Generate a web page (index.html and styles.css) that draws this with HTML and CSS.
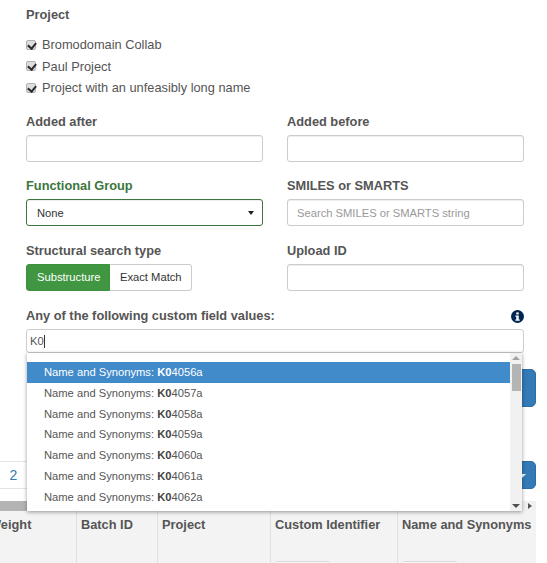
FILE: index.html
```html
<!DOCTYPE html>
<html lang="en">
<head>
<meta charset="utf-8">
<title>Compound search</title>
<link rel="stylesheet" href="styles.css">
</head>
<body>
<div class="page">
  <form class="form">
    <div class="group project">
      <div class="label">Project</div>
      <label class="check"><input type="checkbox" checked>Bromodomain Collab</label>
      <label class="check"><input type="checkbox" checked>Paul Project</label>
      <label class="check"><input type="checkbox" checked>Project with an unfeasibly long name</label>
    </div>
    <div class="grid">
      <div class="group">
        <div class="label">Added after</div>
        <input class="field" type="text">
      </div>
      <div class="group">
        <div class="label">Added before</div>
        <input class="field" type="text">
      </div>
      <div class="group">
        <div class="label success">Functional Group</div>
        <div class="field select success-field">None<span class="caret"></span></div>
      </div>
      <div class="group">
        <div class="label">SMILES or SMARTS</div>
        <input class="field" type="text" placeholder="Search SMILES or SMARTS string">
      </div>
      <div class="group">
        <div class="label">Structural search type</div>
        <div class="btns">
          <span class="btn active">Substructure</span><span class="btn">Exact Match</span>
        </div>
      </div>
      <div class="group">
        <div class="label">Upload ID</div>
        <input class="field" type="text">
      </div>
    </div>
    <div class="custom">
      <div class="custom-head">
        <div class="label">Any of the following custom field values:</div>
        <svg class="info" viewBox="0 0 14 14" width="13" height="13"><circle cx="7" cy="7" r="7" fill="#00254f"/><rect x="5.700" y="2.600" width="2.600" height="2.200" fill="#fff"/><path d="M4.700 5.800h3.600v4.300h1.100v1.400H4.700v-1.400h1V7.200h-1z" fill="#fff"/></svg>
      </div>
      <div class="tagbox">K0<span class="cursor"></span></div>
    </div>
  </form>
  <div class="lower">
    <div class="action action-top"></div>
    <div class="pager-row">
      <span class="page-cell"><span class="page-num">2</span></span>
      <span class="action action-small"><span class="small-caret"></span></span>
    </div>
    <div class="hscroll"><span class="thumb"></span><span class="arrow-right"></span></div>
    <div class="thead">
      <div class="th c1">Weight</div>
      <div class="th c2">Batch ID</div>
      <div class="th c3">Project</div>
      <div class="th c4">Custom Identifier<span class="filter"></span></div>
      <div class="th c5">Name and Synonyms<span class="filter"></span></div>
    </div>
  </div>
  <div class="menu">
    <ul class="items">
      <li class="item on">Name and Synonyms: <b>K0</b>4056a</li>
      <li class="item">Name and Synonyms: <b>K0</b>4057a</li>
      <li class="item">Name and Synonyms: <b>K0</b>4058a</li>
      <li class="item">Name and Synonyms: <b>K0</b>4059a</li>
      <li class="item">Name and Synonyms: <b>K0</b>4060a</li>
      <li class="item">Name and Synonyms: <b>K0</b>4061a</li>
      <li class="item">Name and Synonyms: <b>K0</b>4062a</li>
    </ul>
    <div class="vscroll"><span class="up"></span><span class="vthumb"></span><span class="down"></span></div>
  </div>
</div>
</body>
</html>
```
FILE: styles.css
```css
* { box-sizing: border-box; }
html, body { margin: 0; padding: 0; background: #fff; height: 563px; overflow: hidden; }
body { font-family: "Liberation Sans", Arial, sans-serif; font-size: 12.8px; color: #555; }
.page { position: relative; width: 536px; height: 563px; overflow: hidden; }
.form { padding: 7px 12px 0 26px; }
.label { font-weight: 700; font-size: 12.8px; line-height: 16px; color: #555; }
.label.success { color: #3c763d; }
.project .label { margin-bottom: 11px; }
.check { display: flex; align-items: center; height: 21.500px; font-size: 12.8px; color: #555; }
.check input { position: relative; appearance: none; margin: 0 6px 0 0; width: 10px; height: 10px; background: #dedede; border: 1px solid #b0b0b0; border-radius: 2px; }
.check input::after { content: ""; position: absolute; left: 2px; top: 0; width: 4px; height: 6px; border: solid #2a2a2a; border-width: 0 2px 2px 0; transform: rotate(40deg); }
.grid { display: grid; grid-template-columns: 237px 237px; grid-auto-rows: 64.500px; column-gap: 24px; margin-top: 15px; }
.group .field, .btns { margin-top: 5px; }
.field { display: block; width: 100%; height: 27px; border: 1px solid #ccc; border-radius: 3px; padding: 0 9px; font-family: inherit; font-size: 11.2px; color: #555; background: #fff; box-shadow: inset 0 1px 1px rgba(0,0,0,.075); }
.field::placeholder { color: #999; opacity: 1; }
.select { position: relative; display: flex; align-items: center; padding-left: 10px; color: #333; }
.success-field { border-color: #3c763d; }
.caret { position: absolute; right: 8px; top: 11px; border-top: 4px solid #222; border-left: 3.500px solid transparent; border-right: 3.500px solid transparent; }
.btns { display: flex; }
.btn { display: flex; align-items: center; width: 82px; height: 27px; padding: 0 10px; font-size: 11.2px; color: #333; border: 1px solid #ccc; border-left: 0; border-radius: 0 3px 3px 0; white-space: nowrap; }
.btn.active { width: 84px; color: #fff; background: #419641; border: 1px solid #3e8f3e; border-radius: 3px 0 0 3px; }
.custom-head { display: flex; justify-content: space-between; align-items: center; margin-top: 1px; }
.tagbox { display: flex; align-items: center; height: 24px; margin-top: 5px; padding-left: 3px; border: 1px solid #ccc; border-radius: 3px; font-size: 11.2px; color: #555; }
.cursor { display: inline-block; width: 1px; height: 13px; background: #333; }
.lower { position: absolute; left: 0; right: 0; top: 369px; bottom: 0; }
.action { background: #337ab7; border: 1px solid #2e6da4; }
.action-top { position: absolute; right: 0; top: 0; width: 40px; height: 38px; border-radius: 5px; }
.pager-row { position: absolute; left: 0; right: 0; top: 92px; height: 28px; }
.page-cell { position: absolute; left: 0; top: 0; width: 30px; height: 28px; border: solid #e4e4e4; border-width: 1px 0; }
.page-num { position: absolute; left: 9.500px; top: 5px; color: #337ab7; font-size: 14px; line-height: 16px; }
.action-small { position: absolute; right: 0; top: 0; width: 40px; height: 28px; border-radius: 5px; }
.small-caret { position: absolute; right: 9px; top: 12px; border-top: 4px solid #fff; border-left: 4px solid transparent; border-right: 4px solid transparent; }
.hscroll { position: absolute; left: 0; right: 0; top: 132px; height: 10px; background: #f1f1f1; }
.thumb { position: absolute; left: 0; top: 0; width: 120px; height: 10px; background: #b4b4b4; }
.arrow-right { position: absolute; right: 4px; top: 2px; border-left: 4px solid #555; border-top: 3px solid transparent; border-bottom: 3px solid transparent; }
.thead { position: absolute; left: 0; right: 0; top: 142px; height: 52px; display: flex; background: #f3f3f3; }
.th { position: relative; height: 100%; padding: 6px 4px; font-weight: 700; font-size: 12.8px; line-height: 16px; color: #555; border-right: 1px solid #e0e0e0; white-space: nowrap; }
.c1 { width: 77px; text-indent: -15px; overflow: hidden; }
.c2 { width: 81px; }
.c3 { width: 113px; }
.c4 { width: 127px; }
.c5 { width: 138px; border-right: 0; padding-right: 0; }
.filter { position: absolute; left: 5px; bottom: 0; width: 54px; height: 2px; background: #fafafa; border-top: 1px solid #d8d8d8; border-radius: 3px 3px 0 0; }
.menu { position: absolute; left: 27px; top: 353px; width: 495px; height: 158px; display: flex; background: #fff; box-shadow: 0 1px 4px rgba(0,0,0,.4); }
.items { list-style: none; margin: 0; padding: 9px 0 0; flex: 1; }
.item { height: 20.800px; line-height: 20.800px; padding-left: 17px; font-size: 11.2px; color: #555; white-space: nowrap; }
.item b { color: #444; }
.item.on { background: #428bca; color: #fff; }
.item.on b { color: #fff; }
.vscroll { position: relative; width: 12px; background: #f1f1f1; }
.up { position: absolute; left: 2px; top: 3px; border-bottom: 4px solid #a3a3a3; border-left: 4px solid transparent; border-right: 4px solid transparent; }
.down { position: absolute; left: 2px; bottom: 3px; border-top: 4px solid #505050; border-left: 4px solid transparent; border-right: 4px solid transparent; }
.vthumb { position: absolute; left: 2px; top: 11px; width: 9px; height: 27px; background: #b4b4b4; }
```
